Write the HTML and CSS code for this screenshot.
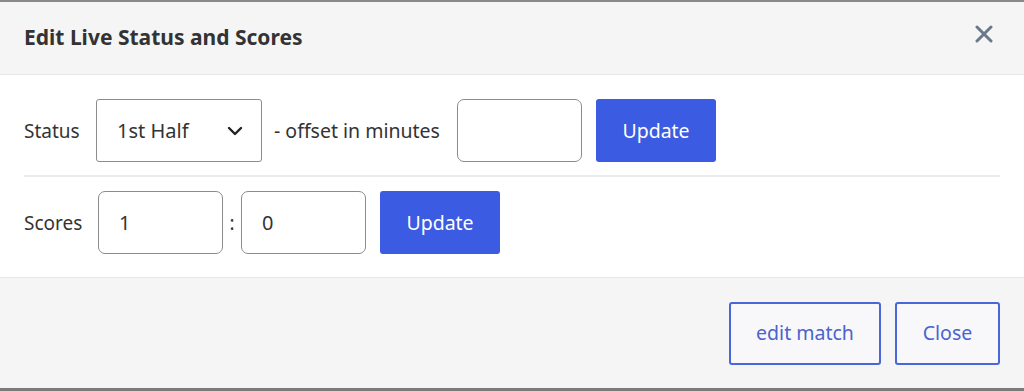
FILE: index.html
```html
<!DOCTYPE html>
<html lang="en">
<head>
<meta charset="UTF-8">
<title>Edit Live Status and Scores</title>
<link rel="stylesheet" href="styles.css">
</head>
<body>

<div class="modal">
<div class="modal-header">
<h2>Edit Live Status and Scores</h2>
<button class="close-x" title="Close">
<svg width="18" height="18" viewBox="0 0 18 18"><path d="M2 2 L16 16 M16 2 L2 16" stroke="#6b7888" stroke-width="3" stroke-linecap="round"/></svg>
</button>
</div>

<div class="modal-body">
<div class="form-row">
<span class="label status">Status</span>
<div class="select">
<span>1st Half</span>
<svg width="16" height="10" viewBox="0 0 16 10"><path d="M2 2 L8 8 L14 2" fill="none" stroke="#222" stroke-width="2.4" stroke-linecap="round" stroke-linejoin="round"/></svg>
</div>
<span class="label offset">- offset in minutes</span>
<input class="field" type="text" value="">
<button class="btn">Update</button>
</div>

<hr class="divider">

<div class="form-row">
<span class="label scores">Scores</span>
<input class="field score" type="text" value="1">
<span class="colon">:</span>
<input class="field" type="text" value="0">
<button class="btn">Update</button>
</div>
</div>

<div class="modal-footer">
<button class="btn-outline edit">edit match</button>
<button class="btn-outline close">Close</button>
</div>
</div>

</body>
</html>
```

FILE: styles.css
```css
/* Reset */
* {
margin: 0;
padding: 0;
box-sizing: border-box;
font-family: 'Noto Sans', 'Open Sans', sans-serif;
}

body {
background-color: #ffffff;
color: #333;
width: 1024px;
height: 391px;
overflow: hidden;
}

.modal {
border-top: 2px solid #8a8a8a;
border-bottom: 3px solid #7a7a7a;
}

/* Header */
.modal-header {
height: 73px;
padding: 0 31px 0 24px;
display: flex;
align-items: center;
justify-content: space-between;
background-color: #f5f5f5;
border-bottom: 1px solid #e6e6e6;
}

.modal-header h2 {
font-size: 21px;
font-weight: 700;
color: #333;
padding-bottom: 2px;
}

.close-x {
background: none;
border: none;
display: flex;
margin-bottom: 8px;
cursor: pointer;
}

/* Body */
.modal-body {
padding: 24px 24px 23px;
background-color: #ffffff;
}

.form-row {
display: flex;
align-items: center;
height: 63px;
}

.label {
font-size: 19px;
color: #333;
white-space: nowrap;
}

.label.status {
width: 56px;
}

.label.scores {
width: 60px;
}

.select {
width: 166px;
height: 63px;
margin-left: 16px;
padding: 0 18px 0 20px;
display: flex;
align-items: center;
justify-content: space-between;
border: 1px solid #8c8c8c;
border-radius: 3px;
font-size: 20px;
color: #333;
}

.offset {
width: 167px;
margin-left: 12px;
font-size: 19.5px;
}

.field {
width: 125px;
height: 63px;
margin-left: 16px;
padding: 0 20px;
border: 1.5px solid #8c8c8c;
border-radius: 7px;
font-size: 20px;
color: #333;
outline: none;
}

.field.score {
margin-left: 14px;
}

.colon {
width: 18px;
text-align: center;
font-size: 19px;
color: #333;
}

.form-row .colon + .field {
margin-left: 0;
}

.btn {
width: 120px;
height: 63px;
margin-left: 14px;
background-color: #3a5be2;
color: #ffffff;
font-size: 19.5px;
border: none;
border-radius: 3px;
cursor: pointer;
}

.divider {
border: none;
border-top: 2px solid #ebebeb;
margin: 13px 0 14px;
}

/* Footer */
.modal-footer {
height: 111px;
padding: 24px 24px 0 0;
display: flex;
align-items: flex-start;
justify-content: flex-end;
gap: 14px;
background-color: #f5f5f5;
border-top: 1px solid #e6e6e6;
}

.btn-outline {
height: 63px;
padding-bottom: 3px;
background-color: #f8f8fa;
color: #4a63cf;
font-size: 19.5px;
border: 2px solid #4a66d8;
border-radius: 3px;
cursor: pointer;
}

.btn-outline.edit {
width: 152px;
}

.btn-outline.close {
width: 105px;
}
```
